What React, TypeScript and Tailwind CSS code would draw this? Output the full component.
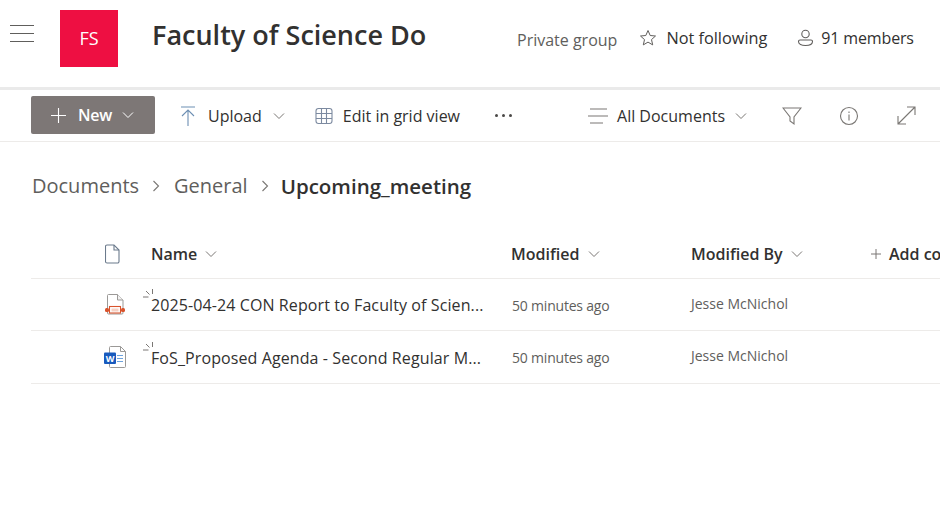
const Chevron = ({ className = "" }: { className?: string }) => (
  <svg className={className} width="12" height="8" viewBox="0 0 12 8" fill="none" stroke="#7a7774" strokeWidth="1">
    <path d="M1 1.5l5 5 5-5" />
  </svg>
);

const Crumb = () => (
  <svg width="8" height="12" viewBox="0 0 8 12" fill="none" stroke="#7a7774" strokeWidth="1.1">
    <path d="M1.5 1l5 5-5 5" />
  </svg>
);

const Spinner = () => (
  <svg className="absolute left-[-8px] top-[-4px]" width="11" height="11" viewBox="0 0 11 11" fill="none" stroke="#7a7774" strokeWidth="1">
    <path d="M9.5 0v5M3 2l3.500 3.500M0 8h5.500" />
  </svg>
);

const files = [
  { name: "2025-04-24 CON Report to Faculty of Scien...", kind: "ppt" },
  { name: "FoS_Proposed Agenda - Second Regular M...", kind: "word" },
];

const PptIcon = () => (
  <svg width="22" height="24" viewBox="0 0 22 24" fill="none">
    <path d="M4.500 1.500h9l5.500 5.500v13a1 1 0 0 1-1 1h-13.500a1 1 0 0 1-1-1v-17.500a1 1 0 0 1 1-1z" fill="#fff" stroke="#9b9997" />
    <path d="M13.500 1.500v5.500h5.500" fill="#f3f2f1" stroke="#9b9997" />
    <rect x="1" y="15" width="4" height="4" rx="1.500" fill="#d9532c" />
    <rect x="17" y="15" width="4" height="4" rx="1.500" fill="#d9532c" />
    <rect x="5.500" y="13.500" width="11" height="6.500" fill="#fff" stroke="#d9532c" strokeWidth="1.100" />
    <rect x="7.500" y="15.500" width="7" height="3" fill="#f6cfc2" />
  </svg>
);

const WordIcon = () => (
  <svg width="24" height="24" viewBox="0 0 24 24" fill="none">
    <path d="M6.500 0.500h10l5 5v15a1 1 0 0 1-1 1h-14a1 1 0 0 1-1-1v-19a1 1 0 0 1 1-1z" fill="#fff" stroke="#9b9997" />
    <path d="M16.500 0.500v5h5" stroke="#9b9997" />
    <path d="M13 9.500h6M13 12.500h6M13 15.500h6" stroke="#6fa3dc" />
    <rect x="0" y="6.500" width="12" height="11.500" rx="1" fill="#185abd" />
    <text x="6" y="15.500" textAnchor="middle" fontSize="9" fontWeight="700" fill="#fff" fontFamily="'Open Sans', sans-serif">W</text>
  </svg>
);

export default function App() {
  return (
    <div className="h-[532px] w-[940px] overflow-hidden bg-white text-[#323130] font-['Open_Sans',sans-serif]">
      <header className="flex h-[90px] items-start border-b-[3px] border-[#eaeaea]">
        <button className="ml-[10px] mt-[25px] flex h-[17px] w-[24px] flex-col justify-between">
          <span className="h-px w-full bg-[#605e5c]" />
          <span className="h-px w-full bg-[#605e5c]" />
          <span className="h-px w-full bg-[#605e5c]" />
        </button>
        <div className="ml-[26px] mt-[10px] flex h-[57px] w-[58px] items-center justify-center bg-[#ee0f42] text-[18px] text-white">FS</div>
        <h1 className="ml-[34px] mt-[15px] w-[274px] overflow-hidden whitespace-nowrap text-[27px] font-semibold leading-[40px]">Faculty of Science Do</h1>
        <span className="ml-[91px] mt-[29px] whitespace-nowrap text-[16px] leading-[22px] text-[#605e5c]">Private group</span>
        <div className="ml-[22px] mt-[27px] flex items-center whitespace-nowrap">
          <svg width="18" height="18" viewBox="0 0 18 18" fill="none" stroke="#605e5c" strokeWidth="1">
            <path d="M9 1.500l2.200 5 5.300.5-4 3.600 1.200 5.300L9 13.100l-4.700 2.800 1.200-5.300-4-3.600 5.300-.5z" />
          </svg>
          <span className="ml-[9px] text-[16.300px] leading-[22px]">Not following</span>
        </div>
        <div className="ml-[30px] mt-[27px] flex items-center whitespace-nowrap">
          <svg width="17" height="18" viewBox="0 0 17 18" fill="none" stroke="#605e5c" strokeWidth="1.100">
            <circle cx="8.500" cy="5" r="3.700" />
            <path d="M1.500 12.500a1.500 1.500 0 0 1 1.500-1.500h11a1.500 1.500 0 0 1 1.500 1.500c0 2.500-3 4-7 4s-7-1.500-7-4z" />
          </svg>
          <span className="ml-[7px] text-[16px] leading-[22px] tracking-[-0.15px]">91 members</span>
        </div>
      </header>

      <div className="flex h-[52px] items-center whitespace-nowrap border-b border-[#edebe9] pl-[31px] text-[16px]">
        <button className="mb-px flex h-[38px] w-[124px] items-center rounded-[2px] bg-[#7d7776] pl-[20px] text-white">
          <svg width="15" height="15" viewBox="0 0 15 15" stroke="#fff" strokeWidth="1.100"><path d="M7.500 0v15M0 7.500h15" /></svg>
          <span className="ml-[12px] font-semibold tracking-[-0.2px]">New</span>
          <svg className="ml-[10px]" width="12" height="8" viewBox="0 0 12 8" fill="none" stroke="#fff" strokeWidth="1"><path d="M1 1.500l5 5 5-5" /></svg>
        </button>
        <svg className="ml-[25px]" width="16" height="20" viewBox="0 0 16 20" fill="none" stroke="#6d8fb3" strokeWidth="1.100">
          <path d="M1 1h14M8 20V4M2 10l6-6 6 6" />
        </svg>
        <span className="ml-[12px]">Upload</span>
        <Chevron className="ml-[11px]" />
        <svg className="ml-[30px]" width="18" height="18" viewBox="0 0 18 18" fill="none" stroke="#7c8aa0" strokeWidth="1.100">
          <rect x="1" y="1.500" width="16" height="15" rx="2.500" />
          <path d="M1 6.500h16M1 11.500h16M6.500 1.500v15M11.500 1.500v15" />
        </svg>
        <span className="ml-[10px]">Edit in grid view</span>
        <div className="ml-[35px] flex gap-[4px]">
          <span className="h-[3px] w-[3px] rounded-full bg-[#4a4846]" />
          <span className="h-[3px] w-[3px] rounded-full bg-[#4a4846]" />
          <span className="h-[3px] w-[3px] rounded-full bg-[#4a4846]" />
        </div>
        <svg className="ml-[76px]" width="20" height="16" viewBox="0 0 20 16" fill="none" stroke="#7a7774" strokeWidth="1.100">
          <path d="M2 1h17M0 8h20M2 15h13" />
        </svg>
        <span className="ml-[9px]">All Documents</span>
        <Chevron className="ml-[10px]" />
        <svg className="ml-[35px]" width="20" height="20" viewBox="0 0 20 20" fill="none" stroke="#7a7774" strokeWidth="1.100">
          <path d="M1 2h18l-7 9v7l-4-3v-4z" />
        </svg>
        <svg className="ml-[37px]" width="20" height="20" viewBox="0 0 20 20" fill="none" stroke="#7a7774" strokeWidth="1.100">
          <circle cx="10" cy="10" r="8.500" />
          <path d="M10 8.500v6M10 5.500v1.500" />
        </svg>
        <svg className="ml-[38px]" width="19" height="19" viewBox="0 0 19 19" fill="none" stroke="#7a7774" strokeWidth="1.100">
          <path d="M1 18L18 1M10 1h8v8M1 10v8h8" />
        </svg>
      </div>

      <nav className="mt-[29px] flex h-[30px] items-center pl-[32px] text-[20px]">
        <span className="text-[#605e5c]">Documents</span>
        <span className="ml-[13px]"><Crumb /></span>
        <span className="ml-[14px] text-[#605e5c]">General</span>
        <span className="ml-[13px]"><Crumb /></span>
        <span className="ml-[12px] text-[20.500px] font-semibold">Upcoming_meeting</span>
      </nav>

      <div className="ml-[31px] mt-[30px]">
        <div className="flex h-[48px] items-center whitespace-nowrap border-b border-[#edebe9] pb-[2px] text-[16px] font-semibold">
          <span className="ml-[74px] w-[46px] shrink-0">
            <svg width="15" height="20" viewBox="0 0 15 20" fill="none" stroke="#6b7a8c" strokeWidth="1.100">
              <path d="M2 1h7l5 5v11.500a1.500 1.500 0 0 1-1.500 1.500h-10.500a1.500 1.500 0 0 1-1.500-1.500v-15a1.500 1.500 0 0 1 1.500-1.500z" />
              <path d="M9 1v5h5" />
            </svg>
          </span>
          <div className="flex w-[360px] shrink-0 items-center"><span>Name</span><Chevron className="ml-[8px]" /></div>
          <div className="flex w-[180px] shrink-0 items-center"><span>Modified</span><Chevron className="ml-[9px]" /></div>
          <div className="flex w-[180px] shrink-0 items-center"><span>Modified By</span><Chevron className="ml-[8px]" /></div>
          <div className="flex shrink-0 items-center">
            <svg width="10" height="10" viewBox="0 0 10 10" stroke="#7a7774" strokeWidth="1"><path d="M5 0v10M0 5h10" /></svg>
            <span className="ml-[8px]">Add column</span>
          </div>
        </div>
        {files.map((file) => (
          <div key={file.name} className="flex h-[52.400px] items-center whitespace-nowrap border-b border-[#edebe9] pt-px">
            <span className="ml-[73px] flex w-[47px] shrink-0 items-center">{file.kind === "ppt" ? <PptIcon /> : <WordIcon />}</span>
            <span className="relative w-[360px] shrink-0 text-[16px] tracking-[0.1px]">
              <Spinner />
              {file.name}
            </span>
            <span className="w-[180px] shrink-0 pl-px text-[14px] tracking-[-0.2px] text-[#605e5c]">50 minutes ago</span>
            <span className="mb-[4px] text-[14px] text-[#605e5c]">Jesse McNichol</span>
          </div>
        ))}
      </div>
    </div>
  );
}
